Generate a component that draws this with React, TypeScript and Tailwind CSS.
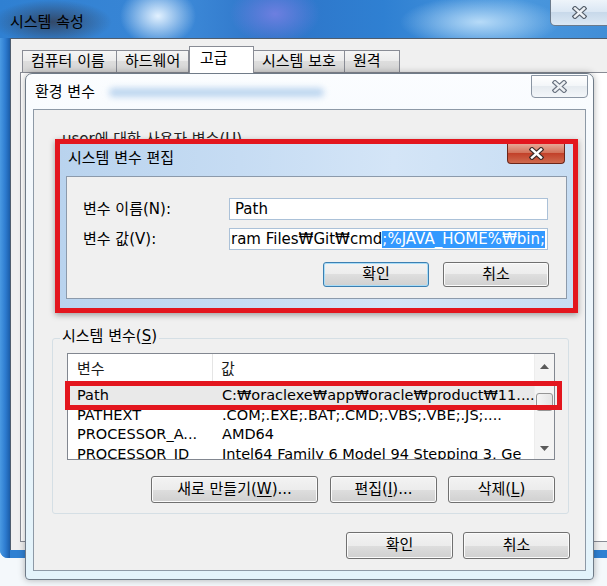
import React from "react";

const font = "font-['DejaVu_Sans','Noto_Sans_CJK_KR',sans-serif]";

function CloseGlyph({ fill, edge }: { fill: string; edge: string }) {
  return (
    <svg width="15" height="13" viewBox="0 0 15 13">
      <path d="M3 2.5 L12 10.5 M12 2.5 L3 10.5" stroke={edge} strokeWidth="4.8" strokeLinecap="square" />
      <path d="M3 2.5 L12 10.5 M12 2.5 L3 10.5" stroke={fill} strokeWidth="2.4" strokeLinecap="square" />
    </svg>
  );
}

function Button({ children, className, focused }: { children: React.ReactNode; className: string; focused?: boolean }) {
  return (
    <div
      className={`flex items-center justify-center rounded-[3px] border bg-[linear-gradient(#f3f3f3_0%,#ececec_50%,#dedede_50%,#d0d0d0_100%)] ${
        focused
          ? "border-[#3c7fb1] shadow-[inset_0_0_0_1px_#a8dcf7]"
          : "border-[#707070] shadow-[inset_0_0_0_1px_#fbfbfb]"
      } ${className}`}
    >
      {children}
    </div>
  );
}

function Arrow({ up }: { up?: boolean }) {
  return (
    <svg width="9" height="5" viewBox="0 0 9 5">
      <polygon points={up ? "0,5 9,5 4.5,0" : "0,0 9,0 4.5,5"} fill="#5a5a5a" />
    </svg>
  );
}

const rows = [
  { name: "Path", value: "C:₩oraclexe₩app₩oracle₩product₩11....", selected: true },
  { name: "PATHEXT", value: ".COM;.EXE;.BAT;.CMD;.VBS;.VBE;.JS;...." },
  { name: "PROCESSOR_A...", value: "AMD64" },
  { name: "PROCESSOR_ID", value: "Intel64 Family 6 Model 94 Stepping 3, Ge" },
];

const tabs = [
  { label: "컴퓨터 이름", w: "w-[95px]" },
  { label: "하드웨어", w: "w-[73px]" },
  { label: "고급", w: "w-[65px]", active: true },
  { label: "시스템 보호", w: "w-[92px]" },
  { label: "원격", w: "w-[56px]" },
];

export default function App() {
  return (
    <div className={`relative w-[607px] h-[586px] overflow-hidden bg-[#f4f8fb] text-[15px] leading-none text-black ${font}`}>
      {/* 시스템 속성 (behind) */}
      <div className="absolute left-0 top-0 w-[640px] h-[558px] flex flex-col rounded-bl-[8px] overflow-hidden bg-[#2f80d2]">
        <div className="relative h-[38px] shrink-0 bg-[radial-gradient(60px_22px_at_52px_22px,rgba(50,35,35,0.6),transparent),radial-gradient(38px_30px_at_158px_16px,#e2f1ff,transparent),radial-gradient(45px_30px_at_275px_14px,#6d7fe0,transparent),radial-gradient(80px_26px_at_480px_22px,#b7dbf8,transparent),linear-gradient(90deg,#2f80d2,#3b87d6_30%,#2e74c8_42%,#2f80d2_60%,#4b98de_80%,#3d8ad4)]">
          <div className="pl-[10px] pt-[15px]">시스템 속성</div>
          <div className="absolute left-[550px] top-0 w-[58px] h-[26px] flex items-center justify-center rounded-bl-[5px] border border-t-0 border-[#6a7a8c] bg-[linear-gradient(#eef4fa,#d9e6f3_50%,#c8d9ea_50%,#dbe8f4)]">
            <CloseGlyph fill="#eef2f6" edge="#56606c" />
          </div>
        </div>
        <div className="flex-1 flex">
          <div className="w-[10px] bg-[linear-gradient(90deg,#4a9ae3,#2d7bcf_55%,#1c5da8)]" />
          <div className="flex-1 flex flex-col bg-[#f0f0f0] border-l border-t border-[#4f5d6e] mb-[8px]">
            <div className="flex items-end h-[33px] pl-[11px]">
              {tabs.map((t) =>
                t.active ? (
                  <div
                    key={t.label}
                    className={`relative z-10 -mb-[1px] h-[27px] ${t.w} flex items-center pl-[10px] pb-[3px] bg-white border border-b-0 border-[#898c95]`}
                  >
                    {t.label}
                  </div>
                ) : (
                  <div
                    key={t.label}
                    className={`h-[22px] ${t.w} flex items-center pl-[8px] border border-b-0 border-[#898c95] -ml-px first:ml-0 bg-[linear-gradient(#f5f5f5,#ebebeb_50%,#dddddd_50%,#d4d4d4)]`}
                  >
                    {t.label}
                  </div>
                )
              )}
            </div>
            <div className="ml-[9px] flex-1 mb-[8px] bg-white border-l border-t border-b border-[#898c95]" />
          </div>
        </div>
      </div>

      {/* 환경 변수 */}
      <div className="absolute left-[25px] top-[73px] w-[569px] h-[507px] flex flex-col rounded-t-[7px] rounded-b-[4px] border border-[#6f7b88] bg-[linear-gradient(180deg,#fbfdff,#f0f6fb_30%,#e3f3fb)] shadow-[0_0_7px_rgba(0,0,0,0.3)]">
        <div className="relative h-[35px] shrink-0">
          <div className="flex items-center pl-[9px] pt-[11px] gap-[14px]">
            <span>환경 변수</span>
            <span className="h-[9px] w-[215px] rounded-full bg-[#bcd5ef] blur-[3px]" />
          </div>
          <div className="absolute right-[5px] top-[1px] w-[57px] h-[23px] flex items-center justify-center rounded-b-[4px] border border-[#8a95a3] bg-[linear-gradient(#ffffff,#f2f5f8_50%,#e6ebf0_50%,#f3f6f9)]">
            <CloseGlyph fill="#eef1f4" edge="#6a7380" />
          </div>
        </div>
        <div className="mx-[7px] mb-[8px] flex-1 flex flex-col border border-[#8d99a6] bg-[#f0f0f0] pl-[18px] pr-[16px]">
          <div className="h-[228px] shrink-0 pt-[22px] pl-[10px] text-[#222]">user에 대한 사용자 변수(U)</div>
          <div className="relative h-[176px] shrink-0 rounded-[3px] border border-[#d5dfe5]">
            <div className="absolute left-[7px] -top-[10px] bg-[#f0f0f0] px-[2px]">
              시스템 변수(<span className="underline underline-offset-2">S</span>)
            </div>
            <div className="ml-[14px] mt-[14px] w-[488px] h-[107px] flex border border-[#828790] bg-white overflow-hidden">
              <div className="flex-1 flex flex-col overflow-hidden text-[14.5px]">
                <div className="h-[32px] shrink-0 flex pb-[2px] text-[15px]">
                  <div className="w-[145px] flex items-center pl-[9px] border-r border-[#e5e5e5] text-[#1a1a1a]">변수</div>
                  <div className="flex items-center pl-[8px] text-[#1a1a1a]">값</div>
                </div>
                {rows.map((r) => (
                  <div
                    key={r.name}
                    className={`h-[19.5px] shrink-0 flex leading-[19.5px] whitespace-nowrap ${r.selected ? "bg-[#e9e9e9]" : ""}`}
                  >
                    <div className="w-[145px] shrink-0 pl-[9px]">{r.name}</div>
                    <div className="pl-[9px]">{r.value}</div>
                  </div>
                ))}
              </div>
              <div className="w-[20px] shrink-0 flex flex-col bg-[#f4f4f4] border-l border-[#ededed]">
                <div className="h-[23px] flex items-center justify-center pt-[2px]">
                  <Arrow up />
                </div>
                <div className="flex-1 pt-[16px]">
                  <div className="mx-[1px] h-[18px] rounded-[3px] border border-[#959595] bg-[linear-gradient(90deg,#f5f5f5,#e4e4e4)]" />
                </div>
                <div className="h-[22px] flex items-center justify-center">
                  <Arrow />
                </div>
              </div>
            </div>
            <div className="mt-[16px] pr-[13px] flex justify-end">
              <Button className="w-[167px] h-[27px]">
                새로 만들기(<span className="underline underline-offset-2">W</span>)...
              </Button>
              <Button className="ml-[12px] w-[107px] h-[27px]">
                편집(<span className="underline underline-offset-2">I</span>)...
              </Button>
              <Button className="ml-[11px] w-[107px] h-[27px]">
                삭제(<span className="underline underline-offset-2">L</span>)
              </Button>
            </div>
          </div>
          <div className="mt-[18px] flex justify-end gap-[10px] -mr-[1px]">
            <Button className="w-[107px] h-[27px]">확인</Button>
            <Button className="w-[107px] h-[27px]">취소</Button>
          </div>
        </div>
      </div>

      {/* 시스템 변수 편집 */}
      <div className="absolute left-[55px] top-[139px] w-[523px] h-[174px] border-[5px] border-[#e3161e] shadow-[0_2px_6px_rgba(0,0,0,0.35)]">
        <div className="h-full flex flex-col bg-[linear-gradient(90deg,#b9d3ee,#c6dcf3_35%,#d4e5f7_65%,#c7ddf3)]">
          <div className="relative h-[32px] shrink-0">
            <div className="pl-[8px] pt-[7px]">시스템 변수 편집</div>
            <div className="absolute right-[8px] top-0 w-[58px] h-[20px] flex items-center justify-center rounded-b-[4px] border border-t-0 border-[#6b2619] bg-[linear-gradient(#e6a796,#d3735b_45%,#c2412a_50%,#cf6a4e)]">
              <CloseGlyph fill="#ffffff" edge="#3a2a28" />
            </div>
          </div>
          <div className="mx-[6px] h-[123px] border border-[#8c9aab] bg-[#f0f0f0] pl-[16px] pt-[21px]">
            <div className="flex items-center">
              <div className="w-[146px]">변수 이름(N):</div>
              <div className="w-[319px] h-[22px] flex items-center pl-[5px] bg-white border border-[#abc1d8]">Path</div>
            </div>
            <div className="flex items-center mt-[8px]">
              <div className="w-[146px]">변수 값(V):</div>
              <div className="w-[319px] h-[22px] flex items-center justify-end pr-[2px] overflow-hidden whitespace-nowrap bg-white border border-[#abc1d8]">
                <span className="shrink-0">C:₩Program Files₩Git₩cmd</span>
                <span className="shrink-0 h-[17px] flex items-center bg-[#3399ff] text-white">;%JAVA_HOME%₩bin;</span>
              </div>
            </div>
            <div className="mt-[12px] pr-[17px] flex justify-end gap-[14px]">
              <Button focused className="w-[106px] h-[25px]">확인</Button>
              <Button className="w-[106px] h-[25px]">취소</Button>
            </div>
          </div>
        </div>
      </div>

      {/* Path 행 강조 */}
      <div className="absolute left-[65px] top-[381px] w-[497px] h-[29px] border-[5px] border-[#e3161e]" />
    </div>
  );
}
